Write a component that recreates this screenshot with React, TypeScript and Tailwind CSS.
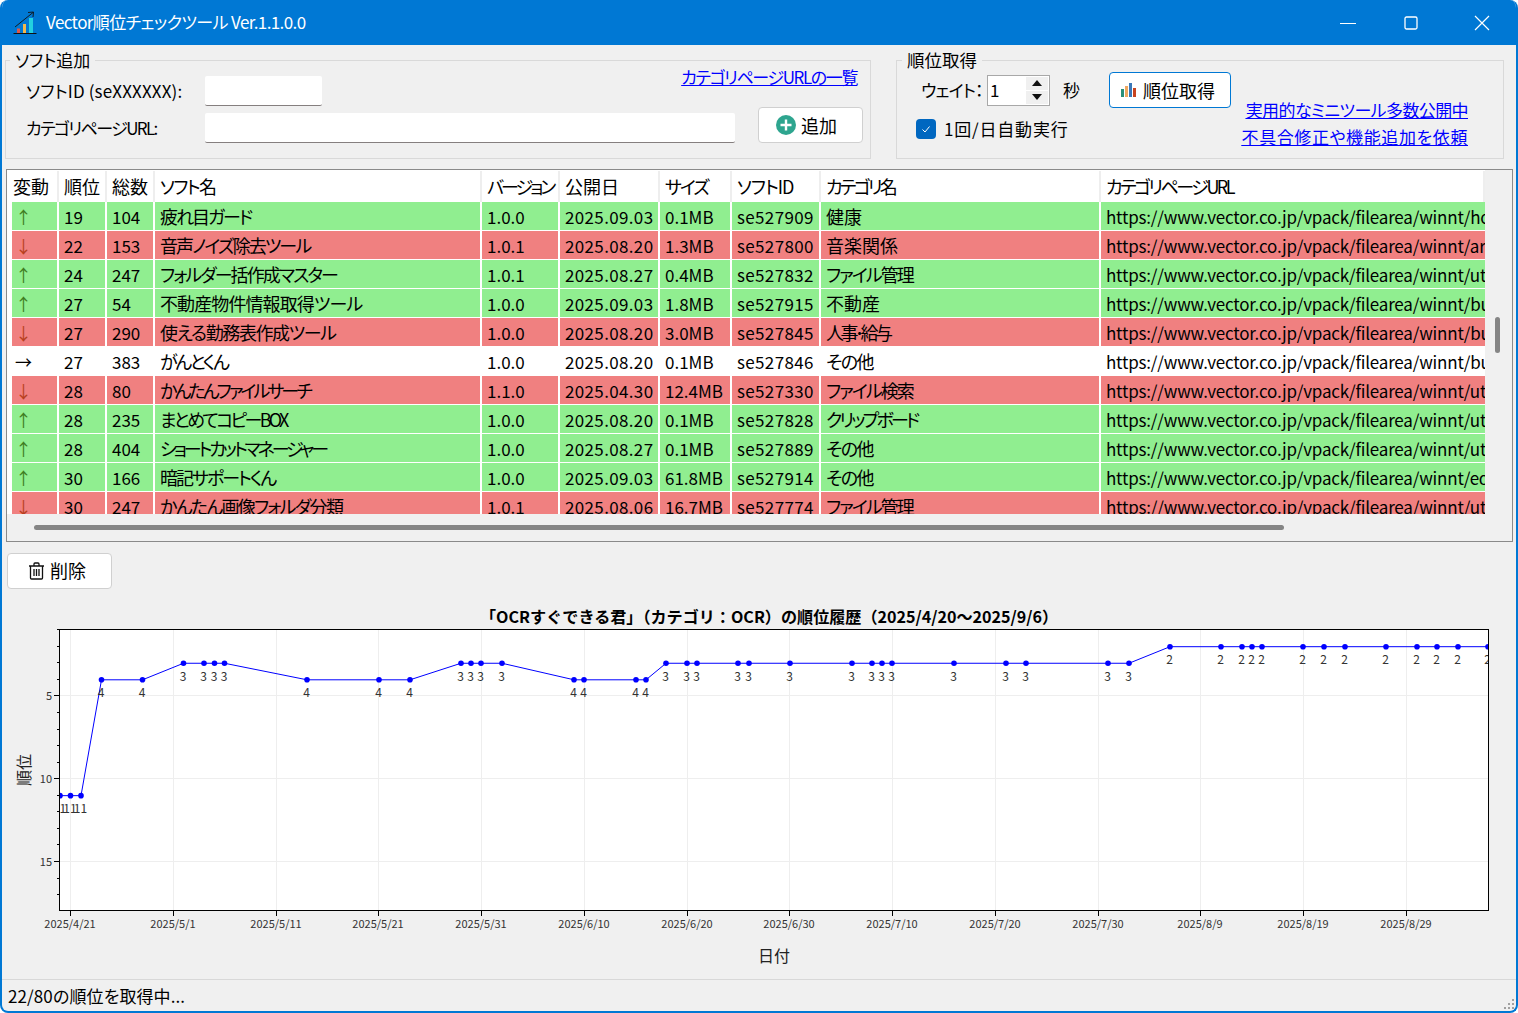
import * as React from "react";

const FONT = "[font-family:'Noto_Sans_CJK_JP','Noto_Sans',sans-serif] [font-feature-settings:'palt']";
const COLS = "grid grid-cols-[47px_48px_48px_327px_78px_100px_72px_89px_280px_384px]";
const BASE_URL = "https://www.vector.co.jp/vpack/filearea/winnt/";

type Row = {
  cells: [string, string, string, string, string, string, string, string, string, string];
  nameCls: string;
  catCls: string;
};

const rows: Row[] = [
  { cells: ["↑", "19", "104", "疲れ目ガード", "1.0.0", "2025.09.03", "0.1MB", "se527909", "健康", "home/health/"], nameCls: "tracking-[-2px]", catCls: "" },
  { cells: ["↓", "22", "153", "音声ノイズ除去ツール", "1.0.1", "2025.08.20", "1.3MB", "se527800", "音楽関係", "art/sound/"], nameCls: "tracking-[-1.900px]", catCls: "" },
  { cells: ["↑", "24", "247", "フォルダー括作成マスター", "1.0.1", "2025.08.27", "0.4MB", "se527832", "ファイル管理", "util/file/"], nameCls: "tracking-[-1.900px]", catCls: "tracking-[-1.900px]" },
  { cells: ["↑", "27", "54", "不動産物件情報取得ツール", "1.0.0", "2025.09.03", "1.8MB", "se527915", "不動産", "business/"], nameCls: "tracking-[-0.9px]", catCls: "" },
  { cells: ["↓", "27", "290", "使える勤務表作成ツール", "1.0.0", "2025.08.20", "3.0MB", "se527845", "人事･給与", "business/"], nameCls: "tracking-[-1.400px]", catCls: "tracking-[-3.500px]" },
  { cells: ["→", "27", "383", "がんとくん", "1.0.0", "2025.08.20", "0.1MB", "se527846", "その他", "business/"], nameCls: "tracking-[-2.300px]", catCls: "tracking-[-1.500px]" },
  { cells: ["↓", "28", "80", "かんたんファイルサーチ", "1.1.0", "2025.04.30", "12.4MB", "se527330", "ファイル検索", "util/file/"], nameCls: "tracking-[-2.900px]", catCls: "tracking-[-1.900px]" },
  { cells: ["↑", "28", "235", "まとめてコピーBOX", "1.0.0", "2025.08.20", "0.1MB", "se527828", "クリップボード", "util/clip/"], nameCls: "tracking-[-2.700px]", catCls: "tracking-[-2.800px]" },
  { cells: ["↑", "28", "404", "ショートカットマネージャー", "1.0.0", "2025.08.27", "0.1MB", "se527889", "その他", "util/"], nameCls: "tracking-[-3.100px]", catCls: "tracking-[-1.500px]" },
  { cells: ["↑", "30", "166", "暗記サポートくん", "1.0.0", "2025.09.03", "61.8MB", "se527914", "その他", "edu/"], nameCls: "tracking-[-2px]", catCls: "tracking-[-1.500px]" },
  { cells: ["↓", "30", "247", "かんたん画像フォルダ分類", "1.0.1", "2025.08.06", "16.7MB", "se527774", "ファイル管理", "util/"], nameCls: "tracking-[-1.700px]", catCls: "tracking-[-1.900px]" },
];

const headers: [string, string][] = [
  ["変動", ""],
  ["順位", ""],
  ["総数", ""],
  ["ソフト名", "tracking-[-1.600px]"],
  ["バージョン", "tracking-[-3px]"],
  ["公開日", ""],
  ["サイズ", "tracking-[-2px]"],
  ["ソフトID", "tracking-[-1px]"],
  ["カテゴリ名", "tracking-[-2.700px]"],
  ["カテゴリページURL", "tracking-[-2.500px]"],
];

// [x, rank]
const points: [number, number][] = [
  [60, 11], [70.5, 11], [81, 11], [101.5, 4], [142.5, 4], [183.5, 3], [204, 3], [214.5, 3], [224.5, 3],
  [307, 4], [379, 4], [410, 4], [461, 3], [471, 3], [481, 3], [502, 3], [574, 4], [584, 4], [636, 4], [646, 4],
  [666, 3], [687, 3], [697, 3], [738, 3], [749, 3], [790, 3], [852, 3], [872, 3], [882, 3], [892, 3], [954, 3],
  [1006, 3], [1026, 3], [1108, 3], [1129, 3], [1170, 2], [1221, 2], [1242, 2], [1252, 2], [1262, 2], [1303, 2],
  [1324, 2], [1345, 2], [1386, 2], [1417, 2], [1437, 2], [1458, 2], [1488, 2],
];

const xTicks: [number, string][] = [
  [70, "2025/4/21"], [173, "2025/5/1"], [276, "2025/5/11"], [378, "2025/5/21"], [481, "2025/5/31"],
  [584, "2025/6/10"], [687, "2025/6/20"], [789, "2025/6/30"], [892, "2025/7/10"], [995, "2025/7/20"],
  [1098, "2025/7/30"], [1200, "2025/8/9"], [1303, "2025/8/19"], [1406, "2025/8/29"],
];

const rankY = (r: number) => 613.6 + r * 16.55;
const gridY = (r: number) => Math.floor(rankY(r) - 0.4) + 0.5;

function AppIcon() {
  return (
    <svg width="24" height="24" viewBox="0 0 24 24">
      <path d="M2 16 L20 1.500 M15 1.500 L20.500 1 L20 6" fill="none" stroke="#111" strokeWidth="0.9" />
      <rect x="4" y="17.500" width="3" height="4.500" fill="#e0584a" />
      <rect x="10" y="13" width="3" height="9" fill="#f2b84b" />
      <rect x="16" y="7" width="4" height="15" fill="#22d0e0" />
      <rect x="0.500" y="22" width="23" height="1" fill="#111" />
    </svg>
  );
}

function Chart() {
  return (
    <svg width="1514" height="375" viewBox="2 604 1514 375" className="block">
      <defs>
        <clipPath id="plot">
          <rect x="60" y="630" width="1428" height="281" />
        </clipPath>
      </defs>
      <rect x="60" y="630" width="1428" height="281" fill="#fff" />
      {xTicks.map(([x]) => (
        <line key={x} x1={x + 0.5} x2={x + 0.5} y1="630" y2="911" stroke="#eeeeee" />
      ))}
      {[5, 10, 15].map((r) => (
        <line key={r} x1="60" x2="1488" y1={gridY(r)} y2={gridY(r)} stroke="#eeeeee" />
      ))}
      {Array.from({ length: 17 }, (_, i) => i + 1).map((r) => (
        <line key={r} x1={r % 5 === 0 ? 54 : 57} x2="60" y1={gridY(r)} y2={gridY(r)} stroke="#000" />
      ))}
      {xTicks.map(([x]) => (
        <line key={x} x1={x + 0.5} x2={x + 0.5} y1="911" y2="916" stroke="#000" />
      ))}
      <g clipPath="url(#plot)">
        <polyline
          points={points.map(([x, r]) => `${x},${rankY(r)}`).join(" ")}
          fill="none"
          stroke="#0000ff"
          strokeWidth="1"
        />
        {points.map(([x, r]) => (
          <circle key={x} cx={x} cy={rankY(r)} r="2.8" fill="#0000ff" />
        ))}
        {points.map(([x, r]) => (
          <text key={x} x={x - 0.5} y={rankY(r) + 17.5} textAnchor="middle" fontSize="12" fill="#333">
            {r}
          </text>
        ))}
      </g>
      <rect x="59.500" y="629.500" width="1429" height="281" fill="none" stroke="#000" />
      {[5, 10, 15].map((r) => (
        <text key={r} x="52" y={gridY(r) + 4} textAnchor="end" fontSize="11" fill="#333">
          {r}
        </text>
      ))}
      {xTicks.map(([x, label]) => (
        <text key={x} x={x} y="927.500" textAnchor="middle" fontSize="11" fill="#333">
          {label}
        </text>
      ))}
      <text x="769" y="623" textAnchor="middle" fontSize="16.100" fontWeight="700" fill="#000" className="[font-feature-settings:normal]">
        「OCRすぐできる君」（カテゴリ：OCR）の順位履歴（2025/4/20～2025/9/6）
      </text>
      <text x="774" y="962" textAnchor="middle" fontSize="16" fill="#222">
        日付
      </text>
      <text x="0" y="0" textAnchor="middle" fontSize="16" fill="#222" transform="translate(30 770) rotate(-90)">
        順位
      </text>
    </svg>
  );
}

export default function App() {
  return (
    <div className={`${FONT} flex h-[1013px] w-[1518px] flex-col overflow-hidden rounded-lg border-2 border-t-0 border-[#0078d4] bg-[#f0f0f0] text-[17px] text-black`}>
      <div className="flex h-[45px] shrink-0 items-center bg-[#0078d4] text-white">
        <div className="ml-[11px] mr-[9px]">
          <AppIcon />
        </div>
        <span className="-translate-y-[1px] text-[17px] tracking-[-0.6px]">Vector順位チェックツール Ver.1.1.0.0</span>
        <div className="ml-auto flex items-center">
          <svg width="16" height="14" viewBox="0 0 16 14" className="mr-[48px]">
            <path d="M0 7.500H16" stroke="#fff" strokeWidth="1.200" />
          </svg>
          <svg width="14" height="14" viewBox="0 0 14 14" className="mr-[56px]">
            <rect x="1" y="1" width="12" height="12" rx="1.500" fill="none" stroke="#fff" strokeWidth="1.300" />
          </svg>
          <svg width="16" height="16" viewBox="0 0 16 16" className="mr-[26px]">
            <path d="M1 1L15 15M15 1L1 15" stroke="#fff" strokeWidth="1.200" />
          </svg>
        </div>
      </div>

      <div className="ml-[3px] mt-[4px] flex h-[110px] shrink-0 items-start">
        <fieldset className="h-[110px] w-[866px] border border-[#d9d9d9] pl-[20px] pr-[7px] pt-[4px]">
          <legend className="-ml-[16px] px-[5px] text-[17px] leading-[22px]">ソフト追加</legend>
          <div className="relative">
            <div className="flex h-[30px] items-center">
              <span className="w-[179px] translate-y-[1px] whitespace-nowrap tracking-[0.15px]">ソフトID (seXXXXXX):</span>
              <div className="mt-[1px] h-[30px] w-[117px] rounded-[2px] border-b border-[#857f7f] bg-white" />
              <a className="mb-[2px] ml-auto mr-[6px] -translate-y-[12px] whitespace-nowrap tracking-[-1.400px] text-[#0000ff] underline">カテゴリページURLの一覧</a>
            </div>
            <div className="mt-[4px] flex h-[36px] items-center">
              <span className="w-[179px] translate-y-[1px] whitespace-nowrap tracking-[-1.600px]">カテゴリページURL:</span>
              <div className="mt-[2px] h-[30px] w-[530px] rounded-[2px] border-b border-[#857f7f] bg-white" />
              <button className="ml-auto flex h-[36px] w-[105px] -translate-y-[2px] items-center gap-[5px] rounded-[4px] border border-[#d0d0d0] bg-white pl-[17px] text-[18px]">
                <svg width="20" height="20" viewBox="0 0 20 20">
                  <circle cx="10" cy="10" r="10" fill="#2ea58f" />
                  <path d="M10 4.500V15.500M4.500 10H15.500" stroke="#fff" strokeWidth="2.400" />
                </svg>
                追加
              </button>
            </div>
          </div>
        </fieldset>

        <fieldset className="ml-[25px] h-[110px] w-[608px] border border-[#d9d9d9] pl-[20px] pt-[4px]">
          <legend className="-ml-[15px] px-[5px] text-[17.500px] leading-[22px]">順位取得</legend>
          <div className="flex">
            <div className="w-[192px]">
              <div className="flex h-[30px] items-center">
                <span className="w-[70px] whitespace-nowrap pl-[4px] tracking-[-0.8px]">ウェイト：</span>
                <div className="flex h-[31px] w-[63px] items-center justify-between border border-[#a8a8a8] bg-white pl-[2px] pr-[1px]">
                  <span>1</span>
                  <div className="flex flex-col gap-[1px]">
                    <div className="flex h-[13px] w-[22px] items-center justify-center bg-[#f0f0f0]">
                      <svg width="10" height="6" viewBox="0 0 10 6"><path d="M5 0L10 6H0Z" fill="#111" /></svg>
                    </div>
                    <div className="flex h-[13px] w-[22px] items-center justify-center bg-[#f0f0f0]">
                      <svg width="10" height="6" viewBox="0 0 10 6"><path d="M5 6L10 0H0Z" fill="#111" /></svg>
                    </div>
                  </div>
                </div>
                <span className="ml-[13px]">秒</span>
              </div>
              <div className="-ml-[1px] mt-[9px] flex h-[30px] items-center">
                <div className="flex h-[20px] w-[20px] items-center justify-center rounded-[4px] bg-[#0067c0]">
                  <svg width="12" height="12" viewBox="0 0 12 12">
                    <path d="M2.500 6.500L5 9L9.500 3.500" fill="none" stroke="#fff" strokeWidth="1" />
                  </svg>
                </div>
                <span className="ml-[8px] tracking-[0.8px]">1回/日自動実行</span>
              </div>
            </div>
            <div className="flex flex-1 items-start justify-between">
              <button className="flex h-[36px] w-[122px] -translate-y-[3px] items-center gap-[6px] rounded-[4px] border border-[#0078d4] bg-white pl-[10px] text-[18px]">
                <svg width="17" height="16" viewBox="0 0 17 16">
                  <rect x="1" y="7" width="3" height="8" fill="#2a8f78" />
                  <rect x="5" y="4" width="3" height="11" fill="#f0a860" />
                  <rect x="9" y="1" width="3" height="14" fill="#3a78b8" />
                  <rect x="13" y="6" width="3" height="9" fill="#c8431e" />
                </svg>
                順位取得
              </button>
              <div className="mr-[35px] mt-[22px] flex flex-col items-end gap-[1px] leading-[26px] text-[#0000ff] underline">
                <a className="tracking-[-0.6px]">実用的なミニツール多数公開中</a>
                <a className="tracking-[0.6px]">不具合修正や機能追加を依頼</a>
              </div>
            </div>
          </div>
        </fieldset>
      </div>

      <div className="ml-[4px] mr-[3px] mt-[10px] h-[373px] shrink-0 overflow-hidden border border-[#8a8a8a] bg-[#f0f0f0]">
        <div className="flex h-[344px]">
          <div className="h-[344px] w-[1478px] overflow-hidden bg-white pl-[1px] pt-[1px]">
            <div className={`${COLS} ml-[4px] h-[31px] text-[18px]`}>
              {headers.map(([h, cls], i) => (
                <div
                  key={h}
                  className={`flex items-center whitespace-nowrap border-r-2 border-[#eeeeee] ${cls} ${i === 0 ? "-ml-[3px] pl-[4px]" : "pl-[5px]"}`}
                >
                  {h}
                </div>
              ))}
            </div>
            <div className="ml-[4px]">
              {rows.map((row, i) => (
                <div
                  key={i}
                  className={`${COLS} h-[29px] overflow-hidden whitespace-nowrap border-b border-white ${
                    row.cells[0] === "↑" ? "bg-[#90ee90]" : row.cells[0] === "↓" ? "bg-[#f08080]" : "bg-white"
                  }`}
                >
                  {row.cells.map((cell, j) => (
                    <div
                      key={j}
                      className={`flex items-center overflow-hidden ${j === 3 || j === 8 ? "" : "pt-[2px]"} ${j === 9 ? "tracking-[-0.2px]" : "border-r-2 border-white"} ${
                        j === 0 ? "pl-[3px]" : "pl-[5px]"
                      } ${j === 0 && cell === "↑" ? "text-[#3f7d20]" : ""} ${j === 0 && cell === "↓" ? "text-[#b8401e]" : ""} ${
                        j === 3 ? `text-[18px] ${row.nameCls}` : ""
                      } ${j === 8 ? `text-[18px] ${row.catCls}` : ""} ${j === 5 || j === 7 ? "tracking-[0.35px]" : ""}`}
                    >
                      {j === 9 ? BASE_URL + cell : cell}
                    </div>
                  ))}
                </div>
              ))}
            </div>
          </div>
          <div className="flex-1 pl-[10px] pt-[147px]">
            <div className="h-[36px] w-[5px] rounded-full bg-[#858585]" />
          </div>
        </div>
        <div className="ml-[27px] mt-[11px] h-[5px] w-[1250px] rounded-full bg-[#858585]" />
      </div>

      <div className="ml-[5px] mt-[11px] shrink-0">
        <button className="flex h-[36px] w-[105px] items-center gap-[5px] rounded-[4px] border border-[#d0d0d0] bg-white pl-[20px] text-[18px]">
          <svg width="17" height="18" viewBox="0 0 17 18" fill="none" stroke="#111" strokeWidth="1.300">
            <path d="M1 4H16M6 4V2C6 1.500 6.500 1 7 1H10C10.500 1 11 1.500 11 2V4" />
            <path d="M2.500 4V16C2.500 16.600 3 17 3.500 17H13.500C14 17 14.500 16.600 14.500 16V4" />
            <path d="M6 7V14M8.500 7V14M11 7V14" />
          </svg>
          <span className="-translate-y-[1px]">削除</span>
        </button>
      </div>

      <div className="mt-[15px] shrink-0">
        <Chart />
      </div>

      <div className="relative flex flex-1 items-center border-t border-[#d8d8d8] pl-[6px]">
        <span className="tracking-[0.1px]">22/80の順位を取得中...</span>
        <svg width="12" height="12" viewBox="0 0 12 12" className="absolute bottom-[1px] right-[1px]" fill="#a0a0a0">
          <rect x="9" y="1" width="2" height="2" />
          <rect x="5" y="5" width="2" height="2" />
          <rect x="9" y="5" width="2" height="2" />
          <rect x="1" y="9" width="2" height="2" />
          <rect x="5" y="9" width="2" height="2" />
          <rect x="9" y="9" width="2" height="2" />
        </svg>
      </div>
    </div>
  );
}
